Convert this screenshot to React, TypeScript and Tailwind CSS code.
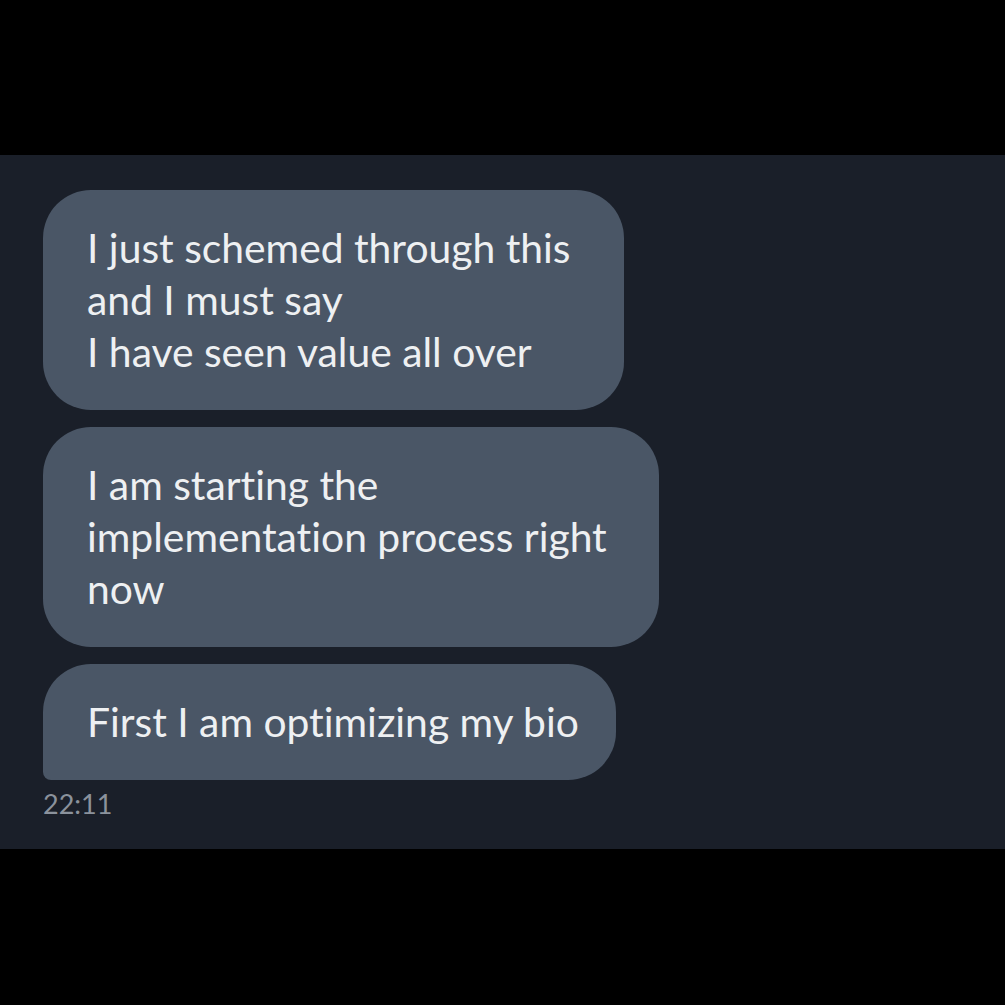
const messages = [
  {
    lines: ["I just schemed through this", "and I must say", "I have seen value all over"],
    width: "w-[581px]",
    corner: "rounded-[48px]",
  },
  {
    lines: ["I am starting the", "implementation process right", "now"],
    width: "w-[616px]",
    corner: "rounded-[48px]",
  },
  {
    lines: ["First I am optimizing my bio"],
    width: "w-[573px]",
    corner: "rounded-[48px] rounded-bl-[8px]",
  },
];

export default function App() {
  return (
    <div className="flex h-[1005px] w-[1005px] flex-col bg-black font-['Lato','Liberation_Sans',sans-serif] [font-variant-ligatures:none]">
      <div className="h-[155px] shrink-0" />
      <div className="flex h-[694px] shrink-0 flex-col bg-[#1a1f29] px-[43px] pt-[35px]">
        <div className="flex flex-col gap-[17px]">
          {messages.map((m, i) => (
            <div
              key={i}
              className={`${m.width} ${m.corner} bg-[#4a5666] py-[32px] pl-[44px] text-[40.8px] leading-[52px] text-[#eef0f2]`}
            >
              {m.lines.map((line, j) => (
                <div key={j} className="whitespace-nowrap">
                  {line}
                </div>
              ))}
            </div>
          ))}
        </div>
        <div className="mt-[8px] text-[27px] leading-[32px] text-[#8b929c]">22:11</div>
      </div>
    </div>
  );
}
